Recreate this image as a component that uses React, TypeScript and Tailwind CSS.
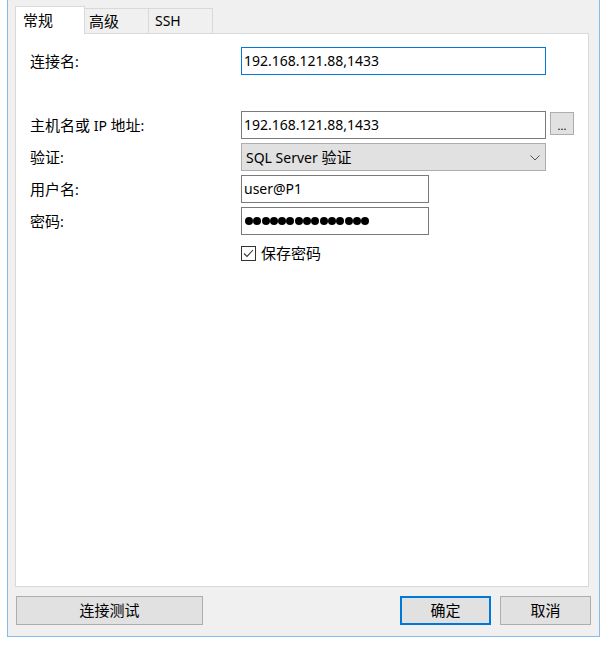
import React from "react";

const L = ({ children }: { children: React.ReactNode }) => <span className="text-[14px]">{children}</span>;

const Input = ({ w, focus, children }: { w: string; focus?: boolean; children: React.ReactNode }) => (
  <div
    className={`${w} h-[28px] bg-white border ${focus ? "border-[#0078d7]" : "border-[#7a7a7a]"} flex items-center pl-[2px] leading-none`}
  >
    {children}
  </div>
);

const Row = ({ label, className, children }: { label: React.ReactNode; className?: string; children: React.ReactNode }) => (
  <div className={`flex items-start ${className ?? ""}`}>
    <div className="w-[225px] pl-[14px] h-[28px] flex items-center whitespace-pre">{label}</div>
    {children}
  </div>
);

export default function App() {
  const dots = Array.from({ length: 15 });
  return (
    <div className="w-[614px] h-[651px] bg-white text-[15px] text-black font-['Noto_Sans','Noto_Sans_CJK_SC',sans-serif]">
      <div className="ml-[7px] w-[593px] h-[637px] bg-[#f0f0f0] border-x border-b border-[#86bbec] flex flex-col pl-[7px] pr-[10px]">
        {/* Tabs */}
        <div className="flex items-end h-[33px]">
          <div className="relative z-10 h-[28px] mb-[-1px] w-[70px] bg-white border-x border-t border-[#d9d9d9] pl-[7px] flex items-center leading-none">
            常规
          </div>
          <div className="h-[25px] w-[64px] border-t border-r border-[#d9d9d9] pl-[4px] flex items-center leading-none">
            高级
          </div>
          <div className="h-[25px] w-[64px] border-t border-r border-[#d9d9d9] pl-[6px] flex items-center leading-none">
            <L>SSH</L>
          </div>
        </div>

        {/* Panel */}
        <div className="h-[554px] bg-white border border-[#d9d9d9] pt-[13px] flex flex-col">
          <Row label={<>连接名<L>:</L></>}>
            <Input w="w-[305px]" focus>
              <L>192.168.121.88,1433</L>
            </Input>
          </Row>
          <Row label={<>主机名或<L> IP </L>地址<L>:</L></>} className="mt-[36px]">
            <Input w="w-[305px]">
              <L>192.168.121.88,1433</L>
            </Input>
            <div className="ml-[4px] mt-[1px] w-[24px] h-[23px] bg-[#e1e1e1] border border-[#adadad] flex items-end justify-center pb-[3px] text-[11px] leading-none">
              ...
            </div>
          </Row>
          <Row label={<>验证<L>:</L></>} className="mt-[4px]">
            <div className="w-[305px] h-[28px] bg-[#e1e1e1] border border-[#adadad] flex items-center justify-between pl-[4px] pr-[5px] leading-none">
              <span className="whitespace-pre">
                <L>SQL Server </L>验证
              </span>
              <svg width="10" height="6" viewBox="0 0 10 6" className="mt-[1px]">
                <path d="M0.5 0.5 L5 5 L9.5 0.5" fill="none" stroke="#555" strokeWidth="1" />
              </svg>
            </div>
          </Row>
          <Row label={<>用户名<L>:</L></>} className="mt-[4px]">
            <Input w="w-[188px]">
              <L>user@P1</L>
            </Input>
          </Row>
          <Row label={<>密码<L>:</L></>} className="mt-[4px]">
            <Input w="w-[188px]">
              <div className="flex items-center gap-[0.3px] pl-[1px] mt-[-1px]">
                {dots.map((_, i) => (
                  <span key={i} className="block w-[8px] h-[8px] rounded-full bg-black" />
                ))}
              </div>
            </Input>
          </Row>
          <div className="mt-[10px] ml-[225px] flex items-center h-[16px]">
            <svg width="15" height="15" viewBox="0 0 15 15">
              <rect x="0.5" y="0.5" width="14" height="14" fill="#fff" stroke="#333" />
              <path d="M3 7.5 L6 10.5 L12 4" fill="none" stroke="#333" strokeWidth="1.1" />
            </svg>
            <span className="ml-[5px] leading-none">保存密码</span>
          </div>
        </div>

        {/* Buttons */}
        <div className="mt-[9px] h-[29px] flex mr-[-2px]">
          <div className="ml-[1px] w-[187px] h-[29px] bg-[#e1e1e1] border border-[#adadad] flex items-center justify-center leading-none">
            连接测试
          </div>
          <div className="flex-1" />
          <div className="w-[91px] h-[29px] bg-[#e1e1e1] border-2 border-[#0078d7] flex items-center justify-center leading-none">
            确定
          </div>
          <div className="ml-[9px] w-[91px] h-[29px] bg-[#e1e1e1] border border-[#adadad] flex items-center justify-center leading-none">
            取消
          </div>
        </div>
      </div>
    </div>
  );
}
